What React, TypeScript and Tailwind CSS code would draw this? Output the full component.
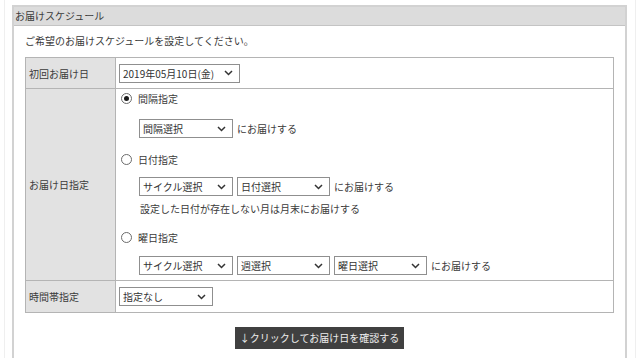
import React from 'react';

const font = { fontFamily: '"Noto Sans CJK JP", "Noto Sans", sans-serif' };

const Chevron = () => (
  <svg
    className="pointer-events-none absolute right-[7px] top-1/2 -translate-y-1/2"
    width="9"
    height="6"
    viewBox="0 0 9 6"
  >
    <path d="M1 1 L4.5 4.5 L8 1" fill="none" stroke="#333" strokeWidth="1.5" />
  </svg>
);

interface FakeSelectProps {
  label: string;
  width: string;
}

const FakeSelect: React.FC<FakeSelectProps> = ({ label, width }) => (
  <div className={`relative h-[19px] ${width}`}>
    <select
      defaultValue={label}
      className="h-full w-full appearance-none border border-[#8f8f8f] bg-white pl-[3px] pr-[18px] text-[10px] leading-[17px] text-[#333] outline-none"
      style={font}
    >
      <option>{label}</option>
    </select>
    <Chevron />
  </div>
);

const Radio: React.FC<{ checked?: boolean; label: string; h: string }> = ({ checked, label, h }) => (
  <label className={`flex ${h} items-center gap-[6px]`}>
    <span className="flex h-[11px] w-[11px] items-center justify-center rounded-full border border-[#6b6b6b] bg-white">
      {checked && <span className="h-[5px] w-[5px] rounded-full bg-[#1a1a1a]" />}
    </span>
    <span>{label}</span>
  </label>
);

export default function App() {
  return (
    <div className="min-h-[358px] bg-white text-[10px] text-[#3a3a3a]" style={font}>
      <div className="mx-[4px] min-h-[358px] border-x border-[#efefef] pl-[7px] pr-[8px] pt-[5px]">
        <div className="min-h-[360px] border-2 border-b-0 border-[#d2d2d2] bg-white">
          <div className="h-[19px] border-b border-[#c4c4c4] bg-[#dcdcdc] pl-[1px] leading-[17px]">
            お届けスケジュール
          </div>

          <div className="px-[11px] pt-[8px]">
            <p className="leading-[14px]">ご希望のお届けスケジュールを設定してください。</p>

            <table className="mt-[9px] w-full border-collapse border border-[#b4b4b4]">
              <tbody>
                <tr className="h-[31px]">
                  <th className="w-[90px] border border-[#b4b4b4] bg-[#e2e2e2] pl-[3px] text-left font-normal">
                    初回お届け日
                  </th>
                  <td className="border border-[#b4b4b4] pl-[3px]">
                    <FakeSelect label="2019年05月10日(金)" width="w-[121px]" />
                  </td>
                </tr>

                <tr>
                  <th className="border border-[#b4b4b4] bg-[#e2e2e2] pl-[3px] text-left font-normal">
                    お届け日指定
                  </th>
                  <td className="border border-[#b4b4b4] pb-[5px] pl-[5px]">
                    <Radio checked label="間隔指定" h="h-[18px]" />
                    <div className="mt-[12px] flex items-center gap-[4px] pl-[18px]">
                      <FakeSelect label="間隔選択" width="w-[94px]" />
                      <span>にお届けする</span>
                    </div>

                    <div className="mt-[11px]">
                      <Radio label="日付指定" h="h-[20px]" />
                    </div>
                    <div className="mt-[8px] flex items-center gap-[4px] pl-[18px]">
                      <FakeSelect label="サイクル選択" width="w-[94px]" />
                      <FakeSelect label="日付選択" width="w-[93px]" />
                      <span>にお届けする</span>
                    </div>
                    <p className="mt-[3px] h-[20px] pl-[19px] leading-[20px]">
                      設定した日付が存在しない月は月末にお届けする
                    </p>

                    <div className="mt-[8px]">
                      <Radio label="曜日指定" h="h-[20px]" />
                    </div>
                    <div className="mt-[9px] flex items-center gap-[4px] pl-[18px]">
                      <FakeSelect label="サイクル選択" width="w-[94px]" />
                      <FakeSelect label="週選択" width="w-[93px]" />
                      <FakeSelect label="曜日選択" width="w-[93px]" />
                      <span>にお届けする</span>
                    </div>
                  </td>
                </tr>

                <tr className="h-[32px]">
                  <th className="border border-[#b4b4b4] bg-[#e2e2e2] pl-[3px] text-left font-normal">
                    時間帯指定
                  </th>
                  <td className="border border-[#b4b4b4] pl-[3px]">
                    <FakeSelect label="指定なし" width="w-[94px]" />
                  </td>
                </tr>
              </tbody>
            </table>

            <div className="mt-[14px] flex justify-center">
              <button
                type="button"
                className="h-[22px] w-[169px] bg-[#404040] text-[10px] leading-[22px] text-[#eeeeee]"
                style={font}
              >
                ↓クリックしてお届け日を確認する
              </button>
            </div>
          </div>
        </div>
      </div>
    </div>
  );
}
